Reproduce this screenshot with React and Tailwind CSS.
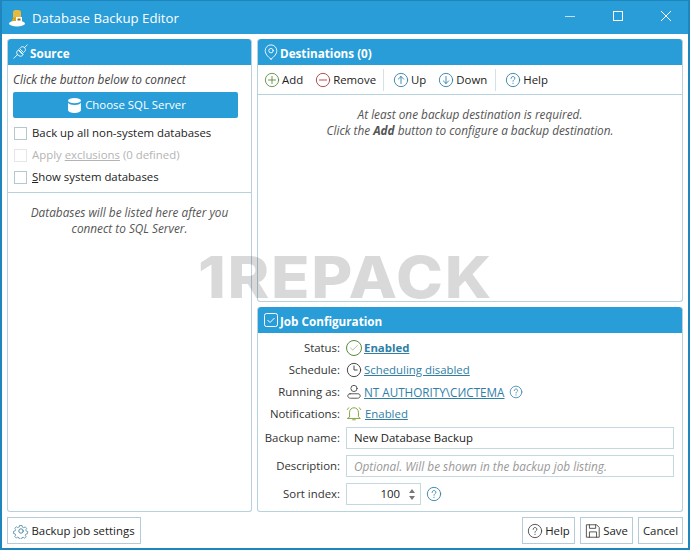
import { Check } from 'lucide-react';

const Stroke = ({ className, children }) => (
  <svg viewBox="0 0 18 18" fill="none" stroke="currentColor" strokeWidth="1" strokeLinecap="round" strokeLinejoin="round" className={className}>
    {children}
  </svg>
);

const CircleIcon = ({ className, children }) => (
  <Stroke className={className}>
    <circle cx="9" cy="9" r="7.5" />
    {children}
  </Stroke>
);

const HelpIcon = ({ className }) => (
  <CircleIcon className={className}>
    <path d="M6.9 7.2c0-1.300 1-2.100 2.100-2.100s2.100.8 2.100 2c0 1.600-2.100 1.600-2.100 3.300" />
    <path d="M9 12.600v.4" />
  </CircleIcon>
);

const ToolButton = ({ icon, label }) => (
  <div className="flex items-center gap-[2px]">
    {icon}
    <span>{label}</span>
  </div>
);

const PanelHeader = ({ icon, title }) => (
  <div className="h-[26px] bg-[#289dd8] rounded-t-[3px] flex items-center pl-[5px] gap-[1px] text-white font-bold text-[11.7px] shrink-0">
    {icon}
    <span className="pt-px">{title}</span>
  </div>
);

const Checkbox = ({ label, disabled }) => (
  <div className={`flex items-center gap-[5px] h-[22px] ml-px ${disabled ? 'text-[#b4b4b4]' : 'text-[#222]'}`}>
    <div className={`w-[13px] h-[13px] border bg-white ${disabled ? 'border-[#e2e8ea]' : 'border-[#b4c8d0]'}`} />
    <span>{label}</span>
  </div>
);

const FieldRow = ({ label, children }) => (
  <div className="flex items-center h-[22px]">
    <div className="w-[82px] text-right text-[#333] shrink-0">{label}</div>
    <div className="ml-[6px] flex items-center flex-1 min-w-0">{children}</div>
  </div>
);

const FooterButton = ({ icon, label, className }) => (
  <div className={`h-[27px] border border-[#b4ccd8] flex items-center justify-center gap-[2px] text-[#222] ${className}`}>
    {icon}
    <span>{label}</span>
  </div>
);

const linkClass = 'text-[#2f7ea6] underline';

export default function App() {
  return (
    <div className="relative w-[690px] h-[550px] overflow-hidden bg-white flex flex-col border-x-2 border-b-2 border-t border-[#1f86bd] text-[11.4px] leading-[16px] font-['Open_Sans','Noto_Sans',sans-serif]">
      {/* title bar */}
      <div className="h-[33px] bg-[#289dd8] flex items-center shrink-0 text-white">
        <svg viewBox="0 0 18 18" className="w-[18px] h-[18px] ml-[6px]">
          <ellipse cx="9" cy="14.500" rx="8" ry="3" fill="#fff" />
          <rect x="5" y="1" width="8" height="9" rx="2.500" fill="#e8b93c" />
          <path d="M4 12c0-3 2-4 5-4 1 0 2 0 3 1v3z" fill="#d9a520" />
          <rect x="8" y="8" width="6" height="5" fill="#fff" />
          <path d="M9.500 9.500h3v2h-3z" fill="#8a6a18" />
        </svg>
        <span className="ml-[6px] text-[13.2px] pt-px">Database Backup Editor</span>
        <div className="ml-auto flex items-center -mt-[3px]">
          <div className="w-[10px] h-px bg-[#bfe2f4] mr-[38px]" />
          <div className="w-[10px] h-[10px] border border-white mr-[38px]" />
          <svg viewBox="0 0 10 10" className="w-[10px] h-[10px] mr-[17px]" stroke="#fff" fill="none">
            <path d="M0 0l10 10M10 0L0 10" />
          </svg>
        </div>
      </div>

      <div className="flex-1 min-h-0 flex flex-col px-[5px] pt-[5px] pb-[4px]">
        <div className="flex-1 min-h-0 flex gap-[5px]">
          {/* source */}
          <div className="w-[245px] flex flex-col border border-[#b6d2dc] border-t-0 rounded-[3px]">
            <PanelHeader
              title="Source"
              icon={
                <Stroke className="w-[16px] h-[16px] text-white">
                  <path d="M1 16l4-4M13 4l3-3M6.500 7.500l4 4M5 12c-1.200-1.200-1.200-3.300 0-4.500l1.500-1 5 5-1 1.500c-1.200 1.200-3.300 1.200-5.500-1zM13 4c1.200 1.200 1.500 3 .3 4.200L11.800 9.500 7.500 5.200 8.800 3.800C10 2.600 11.800 2.800 13 4z" />
                </Stroke>
              }
            />
            <div className="border-b border-[#b6d2dc] pl-[5px] pr-[13px] pt-[6px] pb-[4px]">
              <div className="italic text-[#444] h-[16px] text-[11.8px]">Click the button below to connect</div>
              <div className="mt-[5px] h-[26px] mb-[4px] pl-[3px] bg-[#289dd8] rounded-[2px] flex items-center justify-center gap-[4px] text-white">
                <svg viewBox="0 0 12 14" className="w-[13px] h-[15px]" fill="#fff">
                  <ellipse cx="6" cy="2.500" rx="6" ry="2.500" />
                  <path d="M0 4.500c1 1.500 3 2 6 2s5-.5 6-2v7c0 1.500-3 2.500-6 2.500s-6-1-6-2.500z" />
                </svg>
                <span>Choose SQL Server</span>
              </div>
              <Checkbox label="Back up all non-system databases" />
              <Checkbox
                disabled
                label={
                  <>
                    Apply <span className="underline">exclusions</span> (0 defined)
                  </>
                }
              />
              <Checkbox
                label={
                  <>
                    <span className="underline">S</span>how system databases
                  </>
                }
              />
            </div>
            <div className="pt-[11px] px-[10px] text-center italic text-[#555] text-[11.8px]">
              Databases will be listed here after you
              <br />
              connect to SQL Server.
            </div>
          </div>

          <div className="flex-1 min-w-0 flex flex-col gap-[5px]">
            {/* destinations */}
            <div className="h-[263px] flex flex-col border border-[#b6d2dc] border-t-0 rounded-[3px]">
              <PanelHeader
                title="Destinations (0)"
                icon={
                  <Stroke className="w-[16px] h-[16px] text-white">
                    <path d="M9 17C5 14 2.500 11 2.500 7.500a6.500 6.500 0 0 1 13 0C15.500 11 13 14 9 17z" />
                    <circle cx="9" cy="7.500" r="2.500" />
                  </Stroke>
                }
              />
              <div className="h-[30px] border-b border-[#b6d2dc] flex items-center pl-[6px] pt-px text-[#222]">
                <ToolButton
                  label="Add"
                  icon={
                    <CircleIcon className="w-[16px] h-[16px] text-[#5a8a3c]">
                      <path d="M9 5v8M5 9h8" />
                    </CircleIcon>
                  }
                />
                <div className="ml-[12px]">
                  <ToolButton
                    label="Remove"
                    icon={
                      <CircleIcon className="w-[16px] h-[16px] text-[#a83a3a]">
                        <path d="M5 9h8" />
                      </CircleIcon>
                    }
                  />
                </div>
                <div className="w-px h-[22px] bg-[#d4e2e8] ml-[7px] mr-[9px]" />
                <ToolButton
                  label="Up"
                  icon={
                    <CircleIcon className="w-[16px] h-[16px] text-[#2f7ea6]">
                      <path d="M9 13V5M6 8l3-3 3 3" />
                    </CircleIcon>
                  }
                />
                <div className="ml-[12px]">
                  <ToolButton
                    label="Down"
                    icon={
                      <CircleIcon className="w-[16px] h-[16px] text-[#2f7ea6]">
                        <path d="M9 5v8M6 10l3 3 3-3" />
                      </CircleIcon>
                    }
                  />
                </div>
                <div className="w-px h-[22px] bg-[#d4e2e8] ml-[8px] mr-[9px]" />
                <ToolButton label="Help" icon={<HelpIcon className="w-[16px] h-[16px] text-[#2f7ea6]" />} />
              </div>
              <div className="pt-[11px] text-center italic text-[#555] text-[11.8px]">
                At least one backup destination is required.
                <br />
                Click the <b>Add</b> button to configure a backup destination.
              </div>
            </div>

            {/* job configuration */}
            <div className="flex-1 min-h-0 flex flex-col border border-[#b6d2dc] border-t-0 rounded-[3px]">
              <PanelHeader
                title="Job Configuration"
                icon={
                  <svg viewBox="0 0 14 14" className="w-[14px] h-[14px] mx-px text-white" fill="none" stroke="currentColor">
                    <rect x="0.500" y="0.500" width="13" height="13" rx="2" />
                    <path d="M3.500 7l2.500 2.500 4.500-4.500" />
                  </svg>
                }
              />
              <div className="pt-[4px] pr-[8px]">
                <FieldRow label="Status:">
                  <div className="w-[16px] h-[16px] rounded-full border border-[#5a8a3c] flex items-center justify-center text-[#5a8a3c]">
                    <Check size={10} strokeWidth={1.2} />
                  </div>
                  <span className={`${linkClass} font-bold ml-[2px]`}>Enabled</span>
                </FieldRow>
                <FieldRow label="Schedule:">
                  <CircleIcon className="w-[16px] h-[16px] text-[#333]">
                    <path d="M9 4.500V9h3.500" />
                  </CircleIcon>
                  <span className={`${linkClass} ml-[2px]`}>Scheduling disabled</span>
                </FieldRow>
                <FieldRow label="Running as:">
                  <Stroke className="w-[16px] h-[16px] text-[#444]">
                    <circle cx="9" cy="5" r="3.500" />
                    <path d="M4.500 11h9c1.500 0 2.500 1 2.500 2.500S14.500 16 13 16H5c-1.500 0-3-1-3-2.500S3 11 4.500 11z" />
                  </Stroke>
                  <span className={`${linkClass} ml-[2px] text-[11.7px]`}>NT AUTHORITY\СИСТЕМА</span>
                  <HelpIcon className="w-[14px] h-[14px] text-[#2f7ea6] ml-[4px]" />
                </FieldRow>
                <FieldRow label="Notifications:">
                  <Stroke className="w-[16px] h-[16px] text-[#7a9a2c]">
                    <path d="M4 12V7a5 5 0 0 1 10 0v5l2 2H2zM7.500 15.500h3M3 2L1.500 4M15 2l1.500 2" />
                  </Stroke>
                  <span className={`${linkClass} ml-[3px]`}>Enabled</span>
                </FieldRow>
                <div className="mt-[2px]">
                  <FieldRow label="Backup name:">
                    <div className="h-[22px] flex-1 border border-[#c4d8e0] flex items-center pl-[7px] text-[#222]">New Database Backup</div>
                  </FieldRow>
                </div>
                <div className="mt-[6px]">
                  <FieldRow label="Description:">
                    <div className="h-[22px] flex-1 border border-[#c4d8e0] flex items-center pl-[7px] italic text-[#999] text-[11.8px]">
                      Optional. Will be shown in the backup job listing.
                    </div>
                  </FieldRow>
                </div>
                <div className="mt-[6px]">
                  <FieldRow label="Sort index:">
                    <div className="w-[75px] h-[22px] border border-[#c4d8e0] flex items-center justify-end font-medium text-[#222]">
                      <span>100</span>
                      <div className="flex flex-col items-center gap-[3px] ml-[9px] mr-[5px]">
                        <div className="w-0 h-0 border-x-[3px] border-x-transparent border-b-[4px] border-b-[#777]" />
                        <div className="w-0 h-0 border-x-[3px] border-x-transparent border-t-[4px] border-t-[#777]" />
                      </div>
                    </div>
                    <HelpIcon className="w-[16px] h-[16px] text-[#2f7ea6] ml-[5px]" />
                  </FieldRow>
                </div>
              </div>
            </div>
          </div>
        </div>

        {/* footer */}
        <div className="h-[27px] mt-[5px] flex items-center shrink-0">
          <FooterButton
            className="w-[134px]"
            label="Backup job settings"
            icon={
              <Stroke className="w-[16px] h-[16px] text-[#3f7f9f]">
                <circle cx="9" cy="9" r="2.500" />
                <path d="M7.500 1.500h3l.5 2.200 1.800.8 2-1.100 2 2.200-1.200 1.900.6 1.700 2 .6v-.1l-.2 3-2.200.4-.9 1.800 1.200 1.900-2.200 2-1.900-1.200-1.700.6-.5 2h-3l-.5-2-1.800-.7-1.900 1.200-2.100-2.100 1.200-1.900-.8-1.800-2.100-.4v-3l2.100-.5.8-1.800-1.200-1.900 2.100-2.100 1.900 1.100 1.800-.7z" transform="translate(1.600 1.600) scale(.82)" />
              </Stroke>
            }
          />
          <div className="ml-auto flex gap-[5px]">
            <FooterButton className="w-[53px]" label="Help" icon={<HelpIcon className="w-[16px] h-[16px] text-[#444]" />} />
            <FooterButton
              className="w-[53px]"
              label="Save"
              icon={
                <Stroke className="w-[16px] h-[16px] text-[#444]">
                  <path d="M2 2h11l3 3v11H2zM5 2v4h7V2M5 16v-6h8v6" />
                </Stroke>
              }
            />
            <FooterButton className="w-[45px]" label="Cancel" />
          </div>
        </div>
      </div>

      {/* watermark */}
      <div className="absolute left-[196px] top-[242px] text-[58px] leading-[68px] font-extrabold tracking-[1.5px] font-['Inter',sans-serif] text-black/15 pointer-events-none origin-left scale-x-[1.09]">
        1REPACK
      </div>
    </div>
  );
}
